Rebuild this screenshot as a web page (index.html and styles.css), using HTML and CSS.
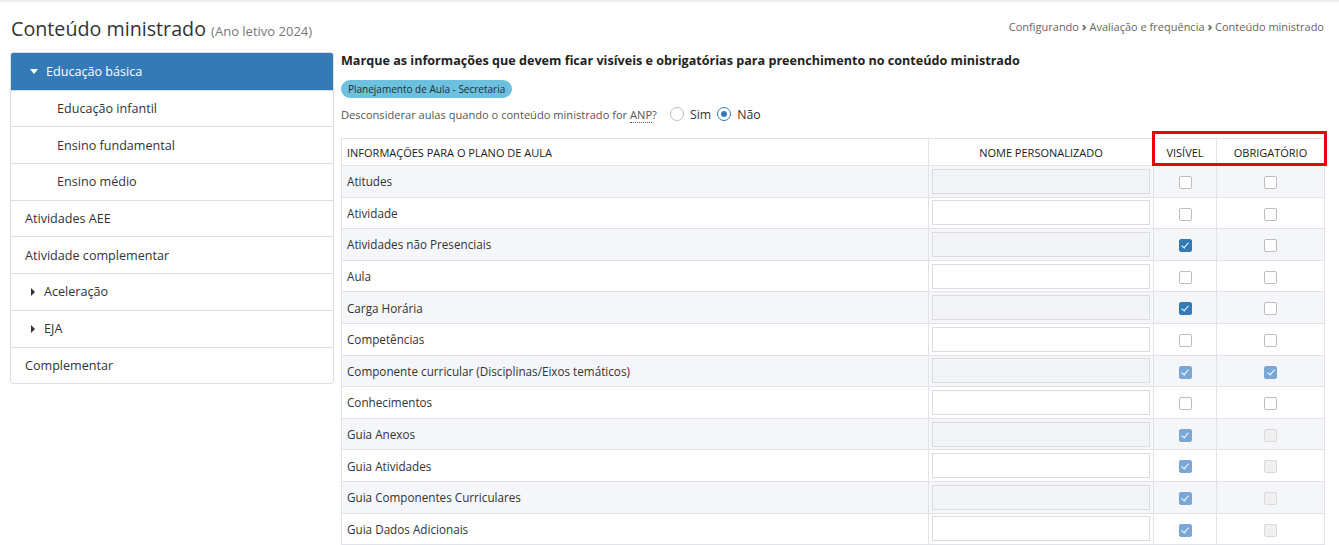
FILE: index.html
```html
<!DOCTYPE html>
<html lang="pt-BR">
<head>
<meta charset="utf-8">
<title>Conteúdo ministrado</title>
<link rel="stylesheet" href="styles.css">
</head>
<body>
<div class="topline"></div>
<header class="page-header">
  <h1 class="title">Conteúdo ministrado <small>(Ano letivo 2024)</small></h1>
  <nav class="breadcrumb">Configurando <span class="sep">›</span> Avaliação e frequência <span class="sep">›</span> Conteúdo ministrado</nav>
</header>
<main class="layout">
  <aside class="sidebar">
    <div class="item active"><span class="caret down"></span>Educação básica</div>
    <div class="item sub">Educação infantil</div>
    <div class="item sub">Ensino fundamental</div>
    <div class="item sub">Ensino médio</div>
    <div class="item">Atividades AEE</div>
    <div class="item">Atividade complementar</div>
    <div class="item"><span class="caret right"></span>Aceleração</div>
    <div class="item"><span class="caret right"></span>EJA</div>
    <div class="item">Complementar</div>
  </aside>
  <section class="content">
    <h2 class="heading">Marque as informações que devem ficar visíveis e obrigatórias para preenchimento no conteúdo ministrado</h2>
    <span class="badge">Planejamento de Aula - Secretaria</span>
    <div class="question">
      <span>Desconsiderar aulas quando o conteúdo ministrado for <abbr>ANP</abbr>?</span>
      <label class="radio"><span class="dot"></span>Sim</label>
      <label class="radio"><span class="dot on"></span>Não</label>
    </div>
    <div class="table-wrap">
      <table class="grid">
        <colgroup>
          <col class="c1"><col class="c2"><col class="c3"><col class="c4">
        </colgroup>
        <thead>
          <tr>
            <th class="left">INFORMAÇÕES PARA O PLANO DE AULA</th>
            <th>NOME PERSONALIZADO</th>
            <th>VISÍVEL</th>
            <th>OBRIGATÓRIO</th>
          </tr>
        </thead>
        <tbody>
          <tr><td>Atitudes</td><td><span class="input"></span></td><td><span class="cb"></span></td><td><span class="cb"></span></td></tr>
          <tr><td>Atividade</td><td><span class="input"></span></td><td><span class="cb"></span></td><td><span class="cb"></span></td></tr>
          <tr><td>Atividades não Presenciais</td><td><span class="input"></span></td><td><span class="cb checked"></span></td><td><span class="cb"></span></td></tr>
          <tr><td>Aula</td><td><span class="input"></span></td><td><span class="cb"></span></td><td><span class="cb"></span></td></tr>
          <tr><td>Carga Horária</td><td><span class="input"></span></td><td><span class="cb checked"></span></td><td><span class="cb"></span></td></tr>
          <tr><td>Competências</td><td><span class="input"></span></td><td><span class="cb"></span></td><td><span class="cb"></span></td></tr>
          <tr><td>Componente curricular (Disciplinas/Eixos temáticos)</td><td><span class="input"></span></td><td><span class="cb checked dis"></span></td><td><span class="cb checked dis"></span></td></tr>
          <tr><td>Conhecimentos</td><td><span class="input"></span></td><td><span class="cb"></span></td><td><span class="cb"></span></td></tr>
          <tr><td>Guia Anexos</td><td><span class="input"></span></td><td><span class="cb checked dis"></span></td><td><span class="cb off"></span></td></tr>
          <tr><td>Guia Atividades</td><td><span class="input"></span></td><td><span class="cb checked dis"></span></td><td><span class="cb off"></span></td></tr>
          <tr><td>Guia Componentes Curriculares</td><td><span class="input"></span></td><td><span class="cb checked dis"></span></td><td><span class="cb off"></span></td></tr>
          <tr><td>Guia Dados Adicionais</td><td><span class="input"></span></td><td><span class="cb checked dis"></span></td><td><span class="cb off"></span></td></tr>
        </tbody>
      </table>
      <div class="highlight"></div>
    </div>
  </section>
</main>
</body>
</html>
```
FILE: styles.css
```css
* { box-sizing: border-box; }
html, body { margin: 0; padding: 0; background: #fff; }
body {
  font-family: "Open Sans", "Noto Sans", sans-serif;
  color: #333;
  font-size: 12px;
  overflow: hidden;
}
.topline { height: 2px; background: #eceef2; }

.page-header {
  display: flex;
  justify-content: space-between;
  align-items: flex-start;
  padding: 0 15px 0 11px;
  height: 50px;
}
.title {
  margin: 13px 0 0;
  font-size: 19.7px;
  font-weight: 400;
  color: #333;
  line-height: 28px;
}
.title small { font-size: 13px; color: #777; }
.breadcrumb {
  margin-top: 15px;
  font-size: 11px;
  color: #666;
  line-height: 18px;
}
.breadcrumb .sep { font-size: 13px; font-weight: 700; color: #666; }

.layout {
  display: flex;
  align-items: flex-start;
  gap: 7px;
  padding: 0 14px 0 10px;
}
.sidebar {
  width: 324px;
  flex: none;
  border: 1px solid #ddd;
  border-radius: 3px;
  overflow: hidden;
}
.item {
  display: flex;
  align-items: center;
  height: 36.7px;
  padding-left: 14px;
  font-size: 12.6px;
  color: #333;
  border-top: 1px solid #ddd;
}
.item:first-child { border-top: none; }
.item.sub { padding-left: 46px; }
.item.active { background: #337ab7; color: #fff; padding-left: 19px; }
.caret { display: inline-block; width: 0; height: 0; margin-right: 8px; }
.caret.down {
  border-left: 4px solid transparent;
  border-right: 4px solid transparent;
  border-top: 5px solid #fff;
}
.caret.right {
  margin-left: 6px;
  margin-right: 9px;
  border-top: 4px solid transparent;
  border-bottom: 4px solid transparent;
  border-left: 4px solid #333;
}

.content { flex: 1; min-width: 0; }
.heading {
  margin: 1px 0 0;
  font-size: 12.6px;
  font-weight: 700;
  color: #222;
  line-height: 16px;
}
.badge {
  display: inline-block;
  margin-top: 11px;
  background: #6cc2de;
  color: #1f2d33;
  font-size: 10px;
  line-height: 18px;
  padding: 0 7px;
  border-radius: 9px;
}
.question {
  display: flex;
  align-items: center;
  height: 20px;
  margin-top: 6px;
  font-size: 11.1px;
  color: #555;
}
.question abbr {
  text-decoration: none;
  border-bottom: 1px dotted #555;
}
.radio {
  display: inline-flex;
  align-items: center;
  margin-left: 13px;
  font-size: 12.3px;
  color: #333;
}
.radio + .radio { margin-left: 6px; }
.dot {
  width: 14px; height: 14px;
  border: 1px solid #bdbdbd;
  border-radius: 50%;
  margin-right: 6px;
  background: #fff;
  position: relative;
}
.dot.on { border-color: #337ab7; }
.dot.on::after {
  content: "";
  position: absolute;
  left: 3px; top: 3px;
  width: 6px; height: 6px;
  border-radius: 50%;
  background: #337ab7;
}

.table-wrap { position: relative; margin-top: 14px; }
.grid {
  width: 100%;
  border-collapse: collapse;
  table-layout: fixed;
  border: 1px solid #e2e3e8;
}
col.c1 { width: 587px; }
col.c2 { width: 225px; }
col.c3 { width: 63px; }
col.c4 { width: auto; }
.grid th {
  height: 27px;
  font-size: 11px;
  font-weight: 400;
  color: #1a1a1a;
  text-align: center;
  border: 1px solid #e2e3e8;
  padding: 0 6px;
}
.grid th.left { text-align: left; padding-left: 5px; }
.grid td {
  height: 31.6px;
  border: 1px solid #e2e3e8;
  padding: 0 3px;
  text-align: center;
  vertical-align: middle;
}
.grid td:first-child { text-align: left; padding-left: 5px; font-size: 11.7px; color: #333; }
.grid tbody tr:nth-child(odd) td { background: #f5f6fa; }
.input {
  display: block;
  height: 25px;
  border: 1px solid #dcdcdc;
  background: #fff;
}
.grid tbody tr:nth-child(odd) .input { background: #f3f4f7; }
.cb {
  display: inline-block;
  width: 13px; height: 13px;
  border: 1px solid #bdbdbd;
  border-radius: 2px;
  background: #fff;
  vertical-align: middle;
  position: relative;
}
.cb.checked { background: #337ab7; border-color: #337ab7; }
.cb.checked.dis { background: #7ba6d8; border-color: #7ba6d8; }
.cb.checked::after {
  content: "";
  position: absolute;
  left: 3.5px; top: 1px;
  width: 3px; height: 6px;
  border: solid #fff;
  border-width: 0 1.5px 1.5px 0;
  transform: rotate(40deg);
}
.cb.off { background: #f0f0f0; border-color: #dadada; }

.highlight {
  position: absolute;
  left: 811px;
  top: -7px;
  width: 175px;
  height: 35px;
  border: 3px solid #e8000b;
  pointer-events: none;
}
```
